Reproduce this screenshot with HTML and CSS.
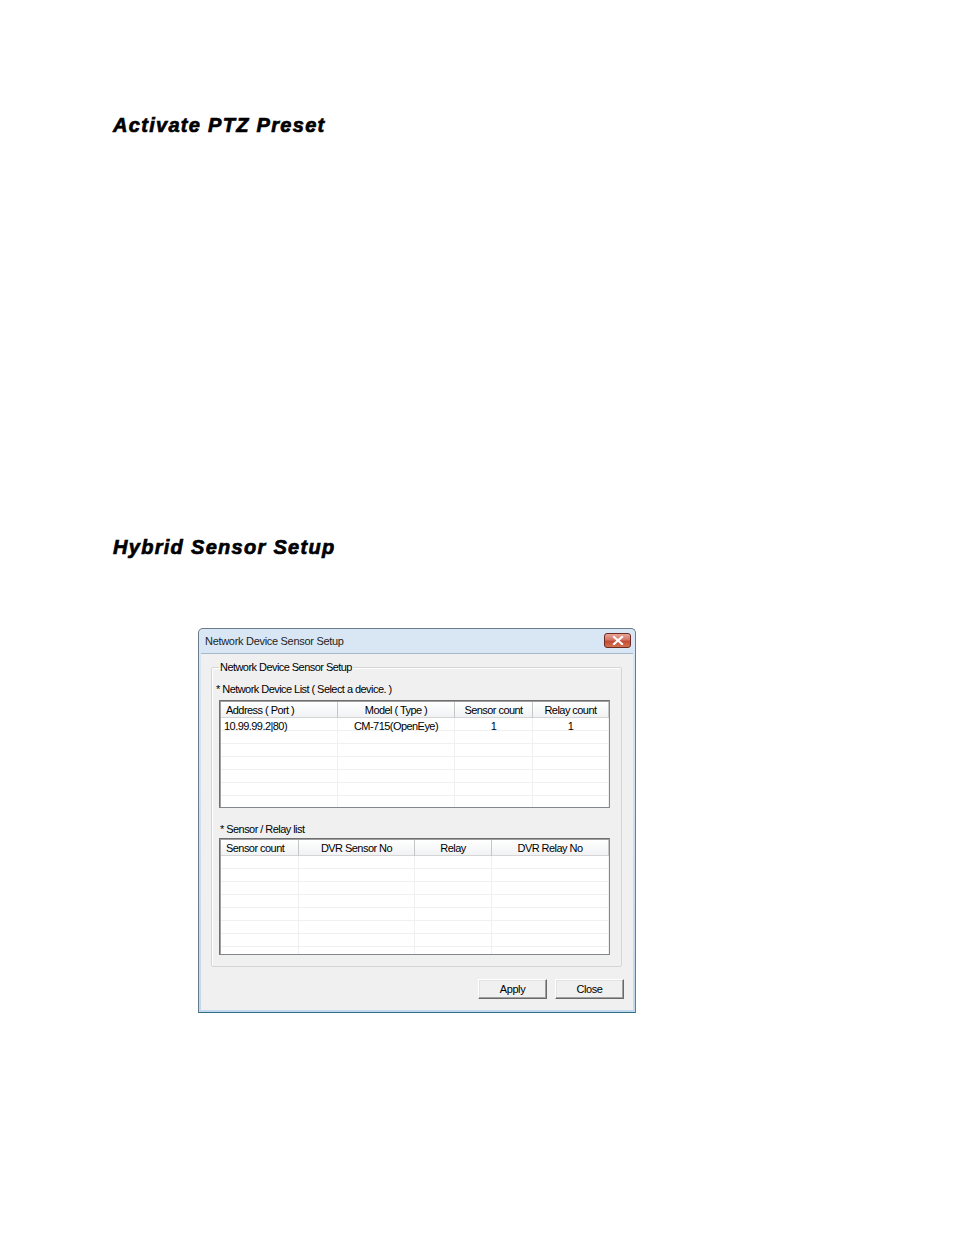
FILE: index.html
```html
<!DOCTYPE html>
<html>
<head>
<meta charset="utf-8">
<link rel="stylesheet" href="styles.css">
</head>
<body>
<div class="page">
  <h2 class="heading h-first">Activate PTZ Preset</h2>
  <h2 class="heading h-second">Hybrid Sensor Setup</h2>

  <div class="dialog">
    <div class="titlebar">
      <span class="title">Network Device Sensor Setup</span>
      <span class="close-btn"><svg width="14" height="9" viewBox="0 0 14 9"><path d="M3 1 L11 8 M11 1 L3 8" stroke="#fff" stroke-width="2.2" stroke-linecap="square"/></svg></span>
    </div>
    <div class="client">
      <fieldset class="group">
        <legend>Network Device Sensor Setup</legend>
        <div class="caption cap1">* Network Device List ( Select a device. )</div>
        <div class="list list1">
          <div class="row head">
            <div class="c l">Address ( Port )</div>
            <div class="c">Model ( Type )</div>
            <div class="c">Sensor count</div>
            <div class="c">Relay count</div>
          </div>
          <div class="row">
            <div class="c l">10.99.99.2|80)</div>
            <div class="c">CM-715(OpenEye)</div>
            <div class="c">1</div>
            <div class="c">1</div>
          </div>
          <div class="row"><div class="c"></div><div class="c"></div><div class="c"></div><div class="c"></div></div>
          <div class="row"><div class="c"></div><div class="c"></div><div class="c"></div><div class="c"></div></div>
          <div class="row"><div class="c"></div><div class="c"></div><div class="c"></div><div class="c"></div></div>
          <div class="row"><div class="c"></div><div class="c"></div><div class="c"></div><div class="c"></div></div>
          <div class="row"><div class="c"></div><div class="c"></div><div class="c"></div><div class="c"></div></div>
          <div class="row last"><div class="c"></div><div class="c"></div><div class="c"></div><div class="c"></div></div>
        </div>
        <div class="caption cap2">* Sensor / Relay list</div>
        <div class="list list2">
          <div class="row head">
            <div class="c l">Sensor count</div>
            <div class="c">DVR Sensor No</div>
            <div class="c">Relay</div>
            <div class="c">DVR Relay No</div>
          </div>
          <div class="row"><div class="c"></div><div class="c"></div><div class="c"></div><div class="c"></div></div>
          <div class="row"><div class="c"></div><div class="c"></div><div class="c"></div><div class="c"></div></div>
          <div class="row"><div class="c"></div><div class="c"></div><div class="c"></div><div class="c"></div></div>
          <div class="row"><div class="c"></div><div class="c"></div><div class="c"></div><div class="c"></div></div>
          <div class="row"><div class="c"></div><div class="c"></div><div class="c"></div><div class="c"></div></div>
          <div class="row"><div class="c"></div><div class="c"></div><div class="c"></div><div class="c"></div></div>
          <div class="row"><div class="c"></div><div class="c"></div><div class="c"></div><div class="c"></div></div>
          <div class="row last"><div class="c"></div><div class="c"></div><div class="c"></div><div class="c"></div></div>
        </div>
      </fieldset>
      <div class="buttons">
        <button class="btn">Apply</button>
        <button class="btn">Close</button>
      </div>
    </div>
  </div>
</div>
</body>
</html>
```

FILE: styles.css
```css
html, body {
  margin: 0;
  padding: 0;
  background: #ffffff;
}

.page {
  padding: 114px 0 0 113px;
  width: 841px;
  height: 1121px;
  font-family: "Liberation Sans", Arial, sans-serif;
}

.heading {
  margin: 0;
  font-family: "Liberation Sans", Arial, sans-serif;
  font-size: 20px;
  line-height: 22px;
  font-weight: bold;
  font-style: italic;
  color: #000;
  -webkit-text-stroke: 0.7px #000;
  letter-spacing: 1.3px;
}

.h-second {
  margin-top: 400px;
}

.dialog {
  margin: 70px 0 0 85px;
  width: 438px;
  height: 385px;
  box-sizing: border-box;
  border: 1px solid #6b7b8c;
  border-bottom-color: #2f6f7f;
  border-radius: 5px 5px 0 0;
  background: linear-gradient(#d9e7f5, #c2d8ee);
  display: flex;
  flex-direction: column;
  font-family: "Liberation Sans", Arial, sans-serif;
  font-size: 11px;
  letter-spacing: -0.55px;
  color: #000;
}

.titlebar {
  height: 24px;
  display: flex;
  align-items: center;
  justify-content: space-between;
  padding: 0 4px 0 6px;
  flex: none;
}

.title {
  font-size: 11px;
  letter-spacing: -0.3px;
  color: #1e1e1e;
}

.close-btn {
  width: 27px;
  height: 15px;
  box-sizing: border-box;
  border: 1px solid #6d2a23;
  border-radius: 3px;
  background: linear-gradient(#e8a597 0%, #d47767 45%, #c24a35 55%, #d2724d 100%);
  display: flex;
  align-items: center;
  justify-content: center;
  margin-top: -2px;
}

.client {
  flex: 1;
  margin: 0 2px 2px 2px;
  background: #f0f0f0;
  border-top: 1px solid #a9b8c8;
  padding: 7px 11px 0 10px;
  display: flex;
  flex-direction: column;
}

.group {
  margin: 0;
  padding: 0 0 11px 7px;
  border: 1px solid #d5d5d5;
  border-radius: 2px;
  box-shadow: inset 1px 1px 0 #fff;
  box-sizing: border-box;
  min-width: 0;
}

.group legend {
  padding: 0 1px;
  margin-left: 0;
  line-height: 13px;
}

.caption {
  line-height: 13px;
}

.cap1 {
  margin: 9px 0 0 -3px;
}

.cap2 {
  margin: 15px 0 0 1px;
}

.list {
  width: 391px;
  box-sizing: border-box;
  border: 1px solid #828790;
  border-top-color: #6e6e6e;
  border-left-color: #6e6e6e;
  box-shadow: inset 1px 1px 0 #a0a0a0;
  background: #fff;
  padding: 1px 0 0 1px;
}

.list1 {
  margin-top: 4px;
}

.list2 {
  margin-top: 2px;
}

.list1 .row {
  display: grid;
  grid-template-columns: 117px 117px 78px 76px;
}

.list2 .row {
  display: grid;
  grid-template-columns: 78px 116px 77px 117px;
}

.row {
  height: 13px;
  border-bottom: 1px solid #f0f0f0;
  box-sizing: border-box;
}

.row .c {
  border-right: 1px solid #f0f0f0;
  text-align: center;
  line-height: 12px;
  padding-top: 2px;
  white-space: nowrap;
}

.row .c.l {
  text-align: left;
  padding-left: 3px;
}

.row.head {
  height: 16px;
  background: linear-gradient(#ffffff, #f1f2f4);
  border-bottom: 1px solid #d5d5d5;
}

.row.head .c {
  border-right: 1px solid #c6c6c6;
  line-height: 15px;
  padding-top: 1px;
}

.row.head .c.l {
  padding-left: 5px;
}

.list1 .row.last {
  height: 11px;
  border-bottom: none;
}

.list2 .row.last {
  height: 7px;
  border-bottom: none;
}

.buttons {
  display: flex;
  justify-content: flex-end;
  align-items: flex-start;
  gap: 8px;
  margin-top: 12px;
  margin-right: -2px;
}

.btn {
  width: 69px;
  height: 20px;
  flex: none;
  box-sizing: border-box;
  font-family: "Liberation Sans", Arial, sans-serif;
  font-size: 11px;
  letter-spacing: -0.4px;
  color: #000;
  background: #f0f0f0;
  border: 1px solid;
  border-color: #ffffff #696969 #696969 #ffffff;
  box-shadow: inset -1px -1px 0 #a0a0a0, inset 1px 1px 0 #e3e3e3;
  padding: 0;
  margin: 0;
}
```
